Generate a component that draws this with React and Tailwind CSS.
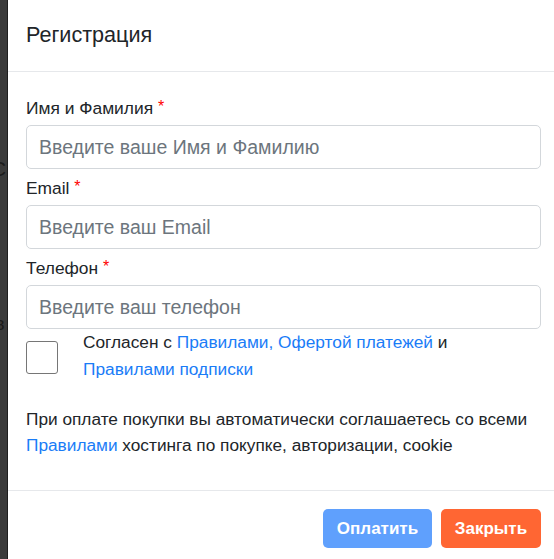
import { useState } from "react";

const FONT = "font-['Liberation_Sans',Arial,sans-serif]";

function Field({ label, placeholder, type = "text" }) {
  return (
    <div className="mt-[6px] flex flex-col first:mt-0">
      <label className="mb-[4px] h-[26px] text-[17.4px] leading-[26px] text-[#212529]">
        {label} <span className="relative -top-[2px] text-[16px] leading-none text-[#ff0000]">*</span>
      </label>
      <input
        type={type}
        placeholder={placeholder}
        className="h-[44px] w-full rounded-[5px] border border-[#d3d7db] bg-white px-[12px] text-[19.5px] text-[#495057] outline-none placeholder:text-[#6c757d]"
      />
    </div>
  );
}

export default function App() {
  const [agree, setAgree] = useState(false);

  return (
    <div className={`flex h-[559px] w-[554px] overflow-hidden bg-white ${FONT}`}>
      {/* backdrop edge */}
      <div className="flex w-[8px] shrink-0 flex-col overflow-hidden border-r border-[#1e1e1e] bg-[#3a3a3a]">
        <span className="-ml-[9px] mt-[158px] text-[21px] leading-none text-[#1b1b1b]">С</span>
        <span className="-ml-[5px] mt-[136px] text-[18px] leading-none text-[#1b1b1b]">в</span>
      </div>

      <div className="flex w-[551px] shrink-0 flex-col rounded-tl-[5px] bg-white">
        {/* header */}
        <div className="flex h-[72px] shrink-0 items-center border-b border-[#e6e8eb] px-[18px] pb-[2px]">
          <h5 className="text-[21.6px] leading-none text-[#212529]">Регистрация</h5>
        </div>

        {/* body */}
        <div className="flex flex-col px-[18px] pt-[23px] pb-[32px]">
          <Field label="Имя и Фамилия" placeholder="Введите ваше Имя и Фамилию" />
          <Field label="Email" placeholder="Введите ваш Email" type="email" />
          <Field label="Телефон" placeholder="Введите ваш телефон" type="tel" />

          <div className="flex items-start">
            <button
              type="button"
              onClick={() => setAgree(!agree)}
              className="mt-[12px] h-[33px] w-[32px] shrink-0 rounded-[3px] border border-[#767676] bg-white"
              aria-pressed={agree}
            />
            <p className="ml-[25px] text-[17.3px] leading-[27px] text-[#212529]">
              Согласен с <a href="#" className="text-[#1a7cf7]">Правилами, Офертой платежей</a> и
              <br />
              <a href="#" className="text-[#1a7cf7]">Правилами подписки</a>
            </p>
          </div>

          <p className="mt-[23px] text-[17.25px] leading-[26px] text-[#212529]">
            При оплате покупки вы автоматически соглашаетесь со всеми
            <br />
            <a href="#" className="text-[#1a7cf7]">Правилами</a> хостинга по покупке, авторизации, cookie
          </p>
        </div>

        {/* footer */}
        <div className="flex justify-end gap-[9px] border-t border-[#e6e8eb] px-[18px] pt-[18px]">
          <button
            type="button"
            className="h-[39px] w-[109px] rounded-[5px] bg-[#5fa0fd] text-[17px] font-bold text-white"
          >
            Оплатить
          </button>
          <button
            type="button"
            className="h-[39px] w-[100px] rounded-[5px] bg-[#ff6633] text-[17px] font-bold text-white"
          >
            Закрыть
          </button>
        </div>
      </div>
    </div>
  );
}
